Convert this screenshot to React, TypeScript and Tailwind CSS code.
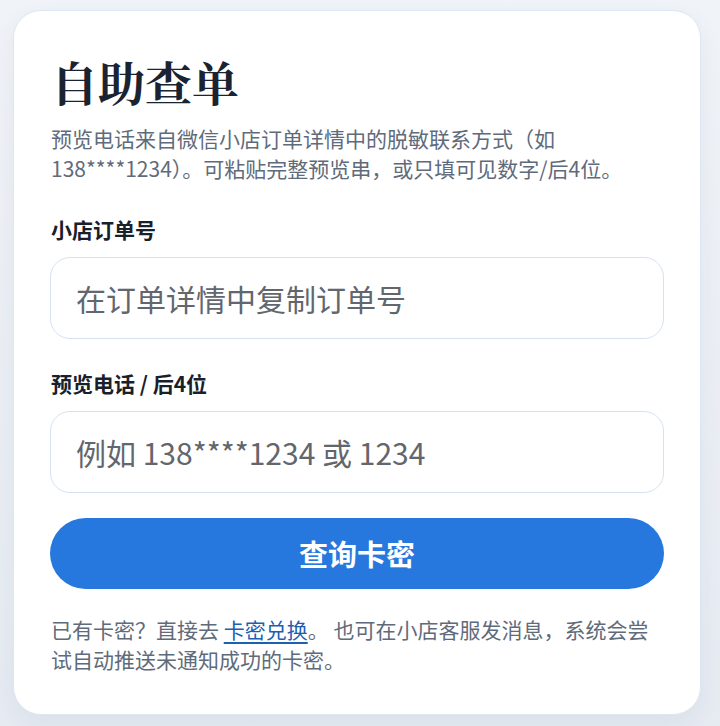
import { useState } from 'react';

const sans = "font-['Noto_Sans_CJK_SC','Noto_Sans',sans-serif]";

export default function App() {
  const [orderId, setOrderId] = useState('');
  const [phone, setPhone] = useState('');

  return (
    <div className={`min-h-[726px] bg-gradient-to-b from-[#f0f3f7] to-[#e6ebf2] pl-[13px] pr-[19px] pt-[10px] pb-[12px] ${sans}`}>
      <div className="rounded-[28px] border border-[#dde6f3] bg-white px-[36px] pt-[37px] pb-[40px] shadow-[0_8px_24px_rgba(30,50,90,0.06)]">
        <div className="px-px">
          <h1 className="font-['Noto_Serif_CJK_SC','Noto_Serif_SC','Source_Han_Serif_SC',serif] text-[47px] font-bold leading-[66px] text-[#1a2332]">
            自助查单
          </h1>
          <p className="mt-[9px] text-[21px] leading-[30px] text-[#5f6b7b]">
            预览电话来自微信小店订单详情中的脱敏联系方式（如 138****1234）。可粘贴完整预览串，或只填可见数字/后4位。
          </p>
        </div>

        <form className="flex flex-col" onSubmit={e => e.preventDefault()}>
          <label className="mt-[32px] px-px text-[21px] font-bold leading-[28px] text-[#18202c]">小店订单号</label>
          <input
            value={orderId}
            onChange={e => setOrderId(e.target.value)}
            placeholder="在订单详情中复制订单号"
            className="mt-[14px] h-[82px] rounded-[20px] border border-[#d5e2f4] bg-white px-[25px] text-[30px] text-[#1a2332] outline-none placeholder:text-[#62666d]"
          />

          <label className="mt-[30px] px-px text-[21px] font-bold leading-[28px] text-[#18202c]">预览电话 / 后4位</label>
          <input
            value={phone}
            onChange={e => setPhone(e.target.value)}
            placeholder="例如 138****1234 或 1234"
            className="mt-[14px] h-[82px] rounded-[20px] border border-[#d5e2f4] bg-white px-[25px] text-[30px] text-[#1a2332] outline-none placeholder:text-[#62666d]"
          />

          <button
            type="submit"
            className="mt-[25px] h-[71px] rounded-full bg-[#2778de] text-[29px] font-bold text-white"
          >
            查询卡密
          </button>
        </form>

        <p className="mt-[25px] px-px text-[21px] leading-[30px] text-[#5f6b7b]">
          已有卡密？直接去 <a href="#" className="text-[#1d5fb0] underline underline-offset-[4px]">卡密兑换</a>。 也可在小店客服发消息，系统会尝试自动推送未通知成功的卡密。
        </p>
      </div>
    </div>
  );
}
